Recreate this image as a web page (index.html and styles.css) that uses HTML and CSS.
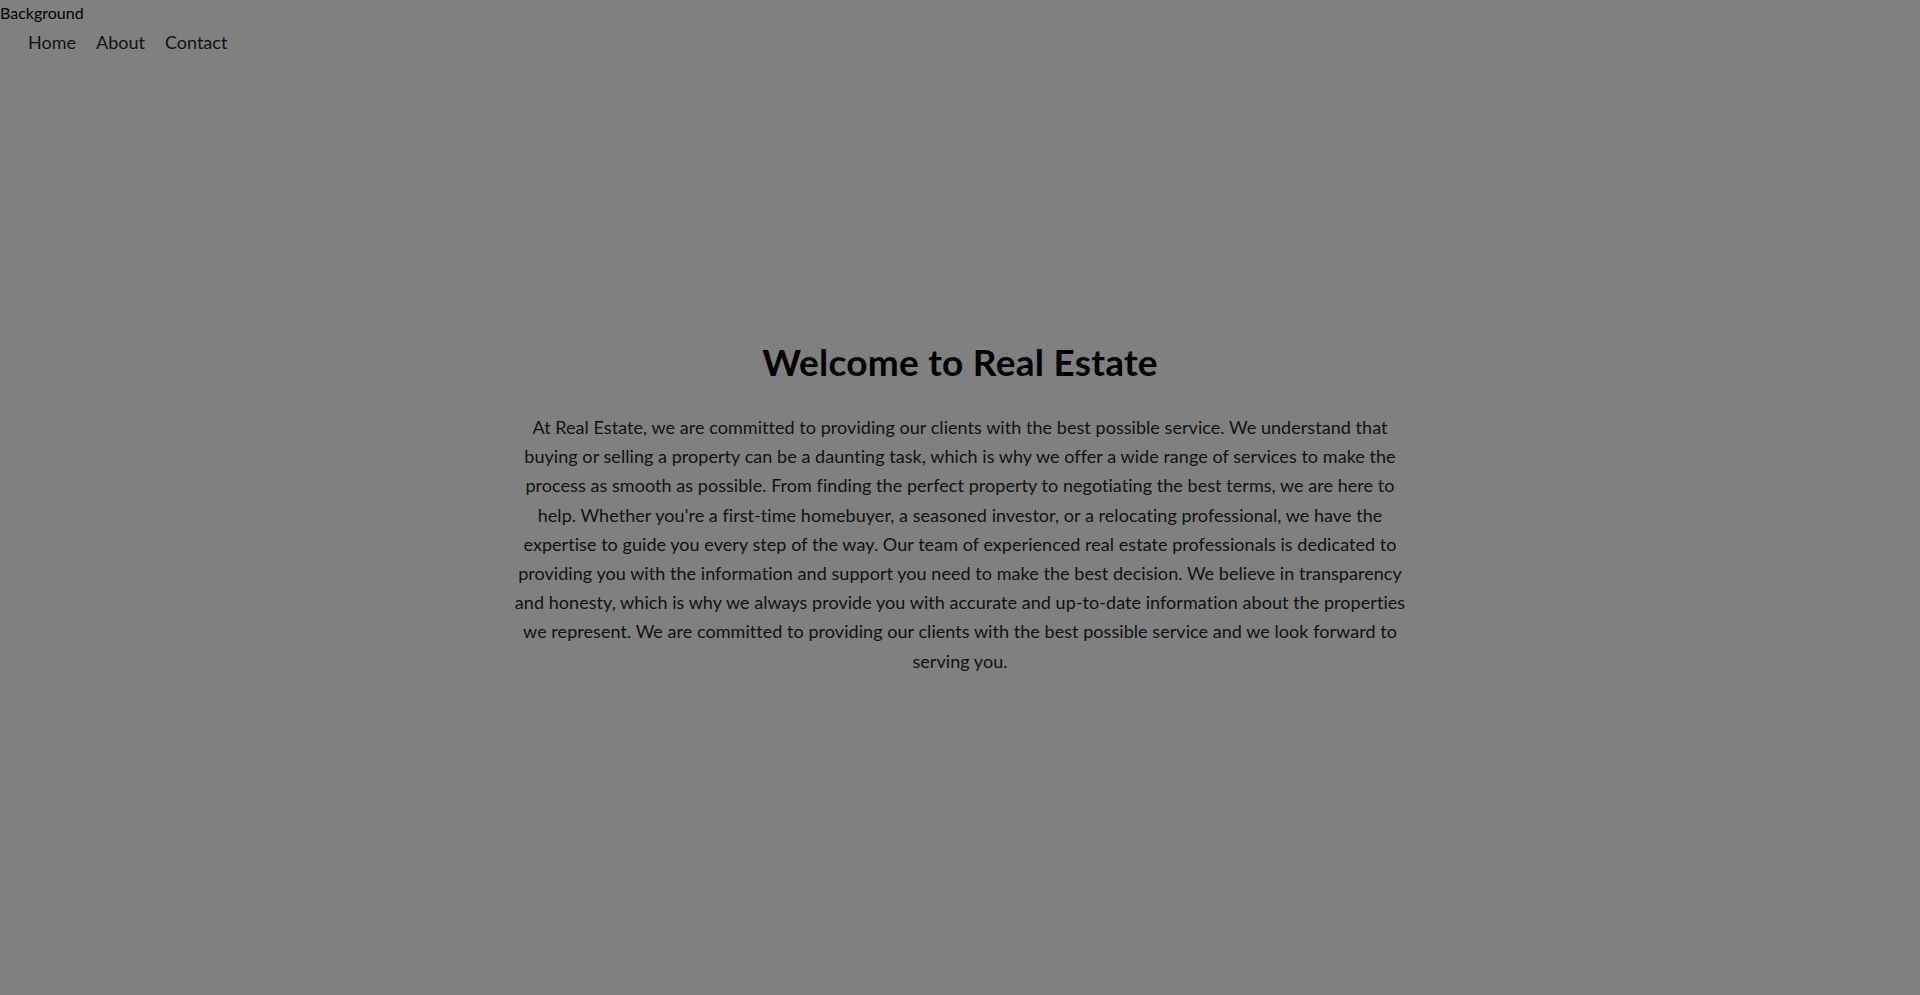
FILE: index.html
```html
<!DOCTYPE html>
<html lang="en">
<head>
<meta charset="utf-8">
<title>Real Estate</title>
<link rel="stylesheet" href="styles.css">
</head>
<body>
<header class="site-header">
  <div class="bg-label">Background</div>
  <nav class="nav">
    <a class="nav-link" href="#">Home</a>
    <a class="nav-link" href="#">About</a>
    <a class="nav-link" href="#">Contact</a>
  </nav>
</header>
<main class="hero">
  <h1 class="hero-title">Welcome to Real Estate</h1>
  <p class="hero-text">At Real Estate, we are committed to providing our clients with the best possible service. We understand that buying or selling a property can be a daunting task, which is why we offer a wide range of services to make the process as smooth as possible. From finding the perfect property to negotiating the best terms, we are here to help. Whether you're a first-time homebuyer, a seasoned investor, or a relocating professional, we have the expertise to guide you every step of the way. Our team of experienced real estate professionals is dedicated to providing you with the information and support you need to make the best decision. We believe in transparency and honesty, which is why we always provide you with accurate and up-to-date information about the properties we represent. We are committed to providing our clients with the best possible service and we look forward to serving you.</p>
</main>
</body>
</html>
```
FILE: styles.css
```css
html, body {
  margin: 0;
  padding: 0;
}
body {
  background: #808080;
  color: #000;
  font-family: Lato, "Liberation Sans", sans-serif;
  min-height: 100vh;
}
.site-header {
  display: flex;
  flex-direction: column;
}
.bg-label {
  font-size: 16px;
  line-height: 21px;
  padding-top: 2px;
  height: 20px;
}
.nav {
  display: flex;
  gap: 20px;
  padding: 10px 0 0 28px;
}
.nav-link {
  font-size: 18px;
  line-height: 21.6px;
  color: #111;
  text-decoration: none;
}
.hero {
  display: flex;
  flex-direction: column;
  align-items: center;
  padding-top: 286px;
}
.hero-title {
  margin: 0;
  font-size: 37px;
  font-weight: 700;
  line-height: 44.4px;
  letter-spacing: 0.25px;
}
.hero-text {
  margin: 29px 0 0;
  max-width: 896px;
  font-size: 18px;
  line-height: 29.2px;
  letter-spacing: 0.05px;
  text-align: center;
  color: #111;
}
```
